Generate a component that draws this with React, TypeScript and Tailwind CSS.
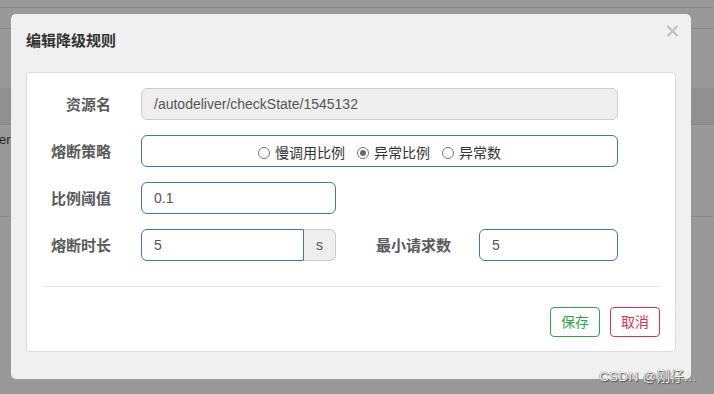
import React from "react";

const font = "font-['Liberation_Sans','Noto_Sans_CJK_SC',sans-serif]";

function Radio({ label, checked }: { label: string; checked?: boolean }) {
  return (
    <label className="flex items-center gap-[5px]">
      <span className="flex h-[12px] w-[12px] items-center justify-center rounded-full border border-[#767676] bg-white">
        {checked && <span className="h-[6px] w-[6px] rounded-full bg-[#6b6b6b]" />}
      </span>
      <span className="text-[14px] leading-none text-[#333]">{label}</span>
    </label>
  );
}

function Label({ children, className = "" }: { children: React.ReactNode; className?: string }) {
  return (
    <div className={`text-right text-[15px] font-bold leading-none text-[#5a5a5a] ${className}`}>
      {children}
    </div>
  );
}

export default function App() {
  return (
    <div className={`relative h-[394px] w-[714px] overflow-hidden bg-[#999999] ${font}`}>
      {/* page behind the overlay */}
      <div className="h-[8px] border-b border-[#8a8a8a]" />
      <div className="h-[21px] border-b border-[#8a8a8a]" />
      <div className="h-[59px]" />
      <div className="h-[37px] border-b border-[#878787] bg-[#909090]" />
      <div className="h-[92px] border-b border-[#8a8a8a] pt-[7px] text-[13px] leading-[16px] text-[#2a2a2a]">
        <span className="-ml-[1px]">er</span>
      </div>

      {/* dialog */}
      <div className="absolute left-[11px] top-[14px] flex h-[365px] w-[680px] flex-col rounded-[5px] bg-[#f0f0f0]">
        <div className="flex h-[58px] items-start justify-between pl-[15px] pr-[12px] pt-[19px]">
          <h4 className="text-[15px] font-bold leading-[16px] text-[#333]">编辑降级规则</h4>
          <svg width="13" height="12" viewBox="0 0 13 12" className="mt-[-8px]">
            <path d="M1.5 1 L11.5 11 M11.5 1 L1.5 11" stroke="#c2c2c2" strokeWidth="2.4" />
          </svg>
        </div>

        <div className="mx-[15px] rounded-[4px] border border-[#dcdcdc] bg-white px-[15px] pb-[14px] pt-[15px]">
          <div className="flex items-center">
            <Label className="w-[69px]">资源名</Label>
            <div className="ml-[30px] flex h-[32px] w-[477px] items-center rounded-[6px] border border-[#cccccc] bg-[#eeeeee] px-[12px] text-[14px] text-[#555]">
              /autodeliver/checkState/1545132
            </div>
          </div>

          <div className="mt-[15px] flex items-center">
            <Label className="w-[69px]">熔断策略</Label>
            <div className="ml-[30px] flex h-[32px] w-[477px] items-center justify-center gap-[12px] rounded-[6px] border border-[#3b77b5] pt-[3px]">
              <Radio label="慢调用比例" />
              <Radio label="异常比例" checked />
              <Radio label="异常数" />
            </div>
          </div>

          <div className="mt-[15px] flex items-center">
            <Label className="w-[69px]">比例阈值</Label>
            <div className="ml-[30px] flex h-[32px] w-[195px] items-center rounded-[6px] border border-[#3b77b5] px-[12px] text-[14px] text-[#555]">
              0.1
            </div>
          </div>

          <div className="mt-[15px] flex items-center">
            <Label className="w-[69px]">熔断时长</Label>
            <div className="ml-[30px] flex h-[32px] w-[195px]">
              <div className="flex flex-1 items-center rounded-l-[6px] border border-[#3b77b5] px-[12px] text-[14px] text-[#555]">
                5
              </div>
              <div className="flex w-[32px] items-center justify-center rounded-r-[6px] border border-l-0 border-[#cccccc] bg-[#eeeeee] text-[14px] text-[#555]">
                s
              </div>
            </div>
            <Label className="ml-[38px] w-[77px] text-left">最小请求数</Label>
            <div className="ml-[28px] flex h-[32px] w-[139px] items-center rounded-[6px] border border-[#3b77b5] px-[12px] text-[14px] text-[#555]">
              5
            </div>
          </div>

          <div className="mt-[25px] border-t border-[#e5e5e5]" />

          <div className="mt-[20px] flex justify-end gap-[10px]">
            <button className="h-[30px] w-[50px] rounded-[4px] border border-[#28a745] bg-white text-[14px] text-[#28a745]">
              保存
            </button>
            <button className="h-[30px] w-[50px] rounded-[4px] border border-[#dc3545] bg-white text-[14px] text-[#dc3545]">
              取消
            </button>
          </div>
        </div>
      </div>

      {/* watermark */}
      <div className="absolute left-[599px] top-[368px] text-[13.5px] leading-[17px] tracking-[0.3px] text-[#f4f4f4] [text-shadow:0_0_1px_#444,1px_1px_1px_#555]">
        CSDN @刚仔...
      </div>
    </div>
  );
}
